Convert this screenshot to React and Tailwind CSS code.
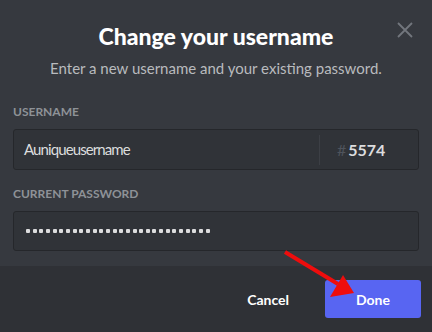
import React from 'react';

const font = { fontFamily: 'Lato, "Open Sans", sans-serif' };

export default function App() {
  const dots = Array.from({ length: 28 });

  return (
    <div className="relative w-[432px] h-[332px] bg-[#36393f] flex flex-col overflow-hidden" style={font}>
      {/* header */}
      <button className="absolute right-[19px] top-[22px] text-[#72767d]">
        <svg width="16" height="16" viewBox="0 0 16 16" fill="none" stroke="currentColor" strokeWidth="1.8">
          <path d="M1 1 L15 15 M15 1 L1 15" />
        </svg>
      </button>

      <div className="flex flex-col items-center pt-[20px]">
        <h1 className="text-[23px] leading-[32px] font-black text-white">Change your username</h1>
        <p className="mt-[6px] text-[15px] leading-[20px] text-[#b9bbbe]">Enter a new username and your existing password.</p>
      </div>

      {/* form */}
      <div className="flex flex-col px-[13px] pt-[26px] flex-1">
        <label className="text-[12px] leading-[16px] font-bold uppercase text-[#8e9297]">Username</label>
        <div className="mt-[9px] h-[41px] flex items-center rounded-[3px] border border-[#25272b] bg-[#303338]">
          <span className="flex-1 pl-[10px] text-[15px] tracking-[-0.9px] text-[#dcddde]">Auniqueusername</span>
          <div className="w-px h-[30px] bg-[#3c3f45]" />
          <div className="w-[98px] flex items-center pl-[17px] text-[16px]">
            <span className="text-[#4f545c] mr-[2px]">#</span>
            <span className="font-bold text-[#dcddde]">5574</span>
          </div>
        </div>

        <label className="mt-[16px] text-[12px] leading-[16px] font-bold uppercase text-[#8e9297]">Current Password</label>
        <div className="mt-[9px] h-[40px] flex items-center rounded-[3px] border border-[#25272b] bg-[#303338] pl-[12px]">
          <div className="flex items-center gap-[2.67px]">
            {dots.map((_, i) => (
              <span key={i} className="w-[4px] h-[4px] rounded-[1px] bg-[#dcddde]" />
            ))}
          </div>
        </div>
      </div>

      {/* footer */}
      <div className="h-[66px] bg-[#2f3136] flex items-center justify-end pr-[11px]">
        <button className="text-[14px] font-bold text-white mr-[36px]">Cancel</button>
        <button className="w-[96px] h-[38px] rounded-[3px] bg-[#5865f2] text-[14px] font-bold text-white">Done</button>
      </div>

      {/* annotation arrow */}
      <svg className="absolute left-0 top-0 pointer-events-none" width="432" height="332">
        <line x1="285" y1="252" x2="338" y2="284" stroke="#ee0d0d" strokeWidth="4" />
        <polygon points="343,275 330,297 354,293" fill="#ee0d0d" />
      </svg>
    </div>
  );
}
